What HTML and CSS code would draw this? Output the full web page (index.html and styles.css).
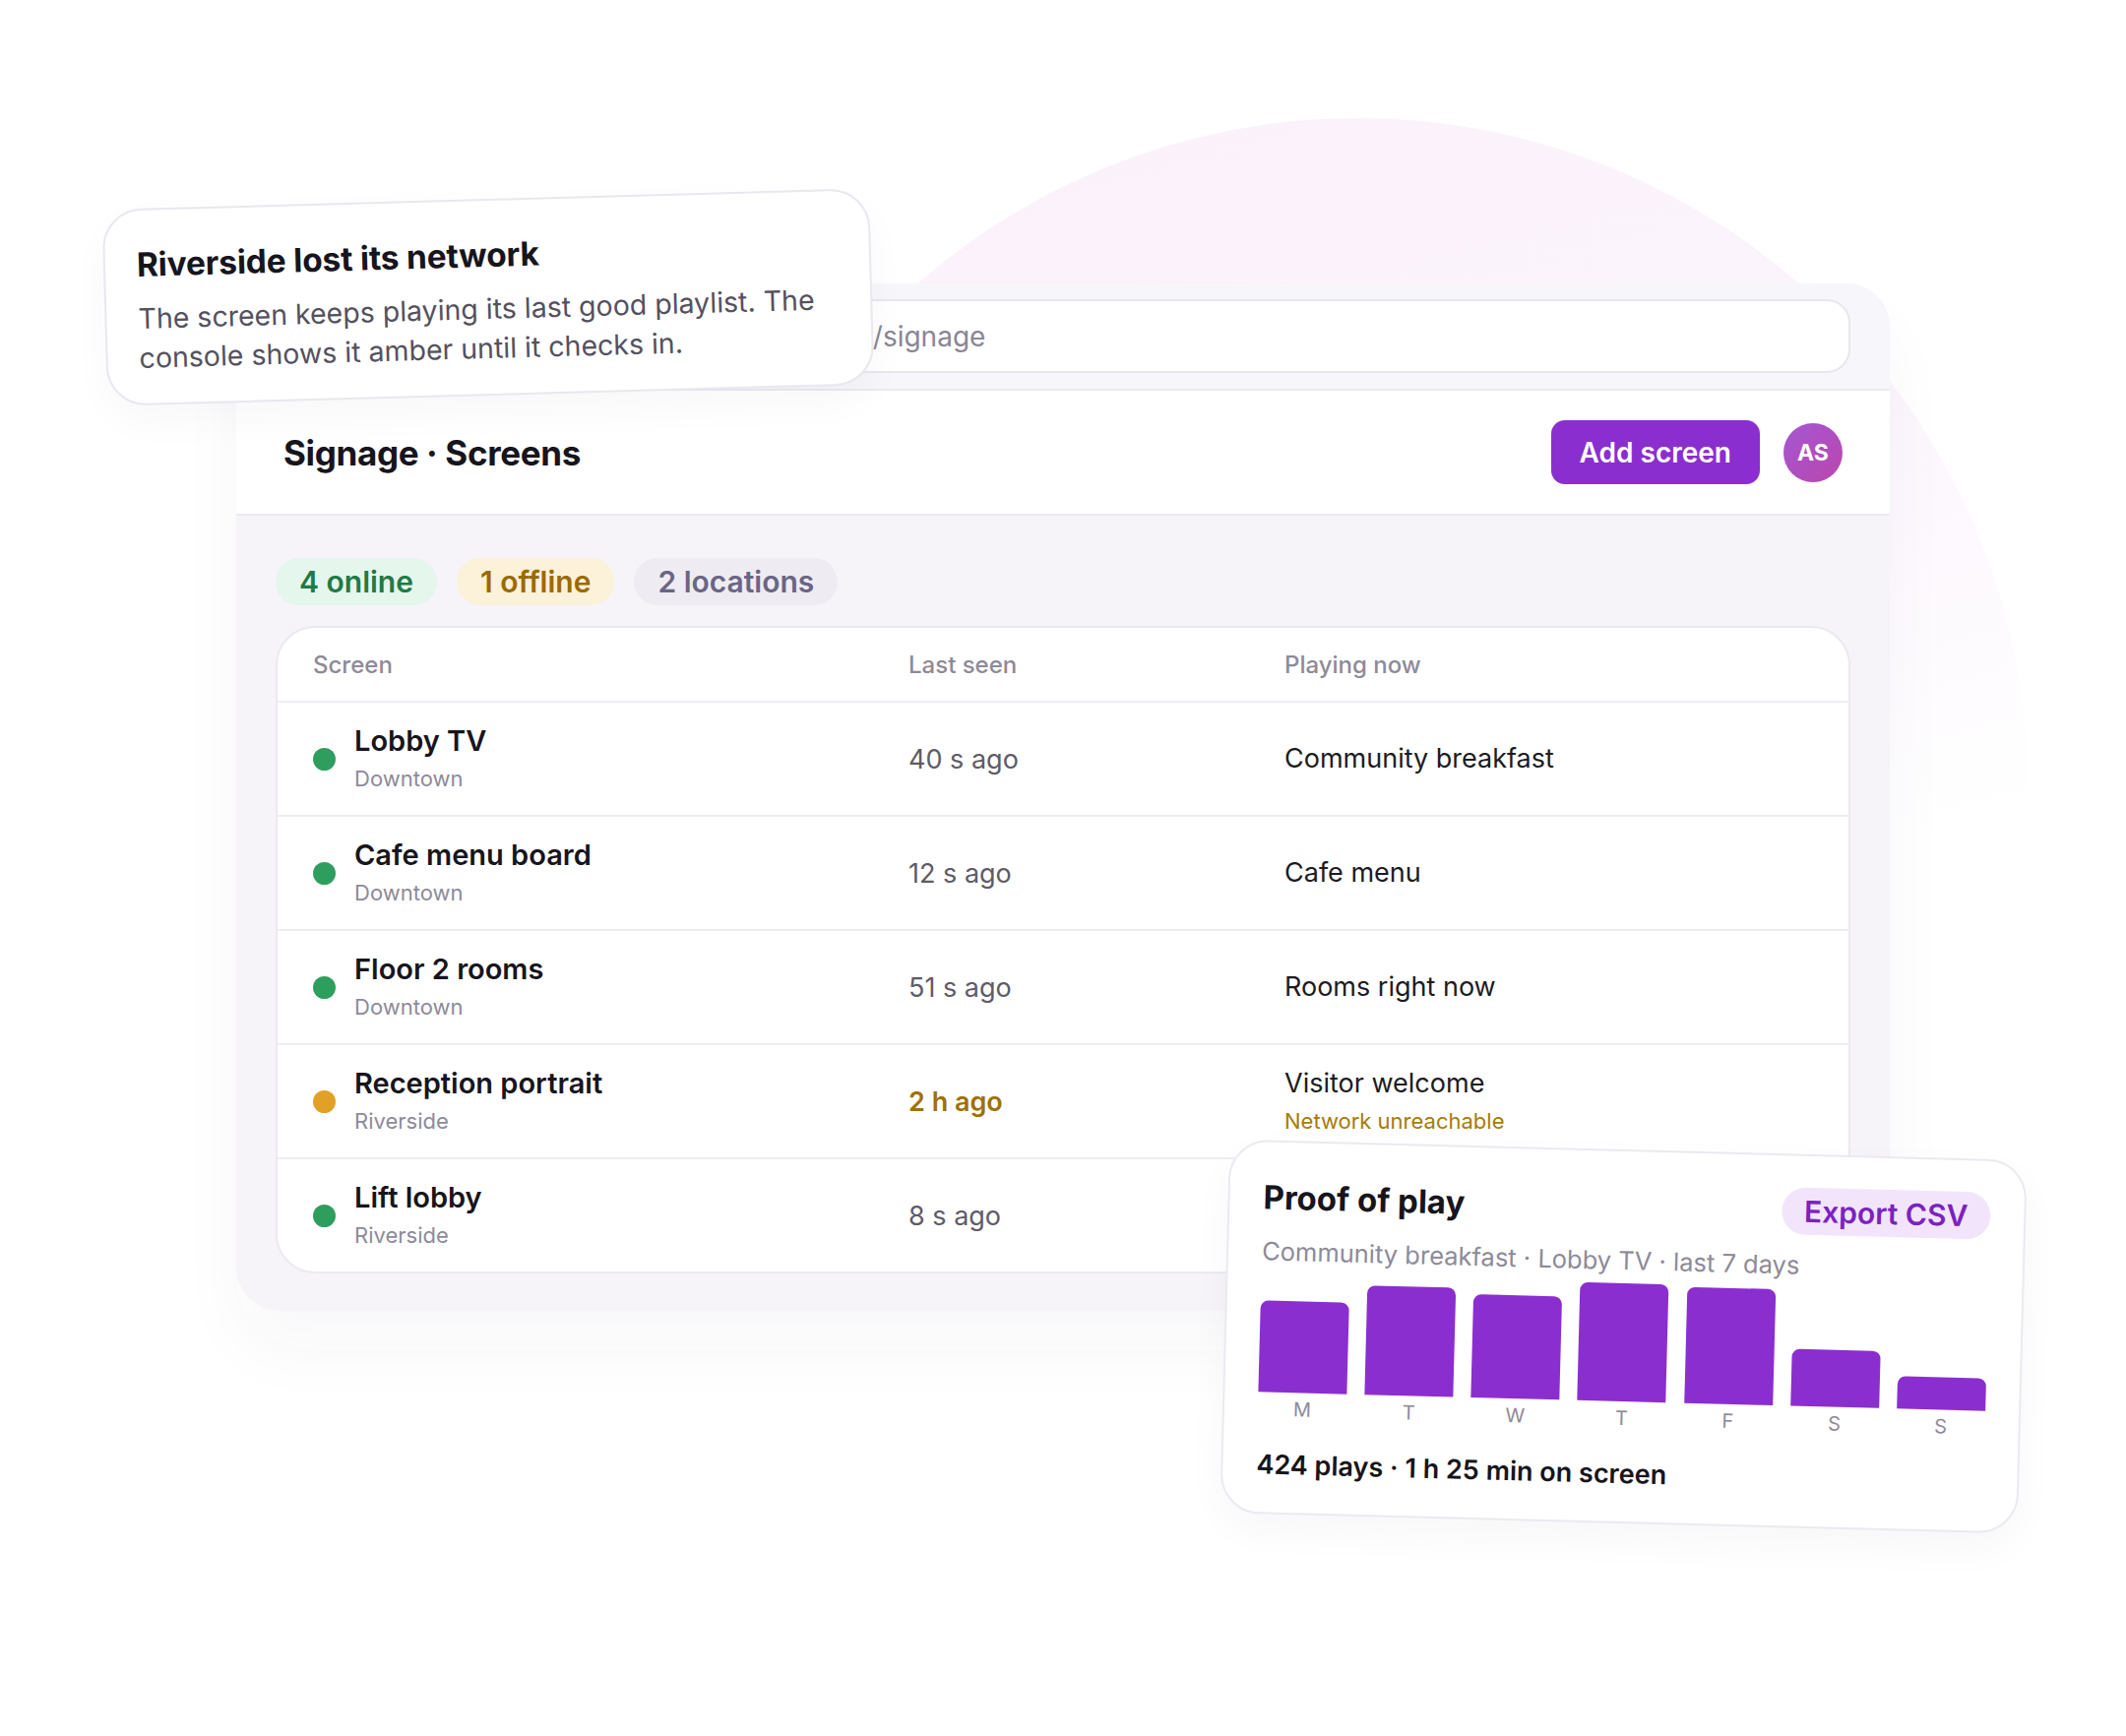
FILE: index.html
```html
<!DOCTYPE html>
<html lang="en">
  <head>
    <meta charset="UTF-8" />
    <meta name="viewport" content="width=device-width, initial-scale=1.0" />
    <title>Signage · Screens</title>
    <link rel="stylesheet" href="styles.css">
  </head>
  <body>
    <div class="stage">
      <div class="glow"></div>

      <div class="window">
        <div class="toolbar">
          <div class="url"><span class="host">https://console.example.com/northwind</span><span class="path">/signage</span></div>
        </div>
        <header class="topbar">
          <h1>Signage · Screens</h1>
          <button class="add">Add screen</button>
          <span class="avatar">AS</span>
        </header>
        <main class="content">
          <ul class="pills">
            <li class="pill ok">4 online</li>
            <li class="pill warn">1 offline</li>
            <li class="pill muted">2 locations</li>
          </ul>
          <div class="screens">
            <div class="row head">
              <span>Screen</span>
              <span>Last seen</span>
              <span>Playing now</span>
            </div>
            <div class="row">
              <div class="screen"><i class="dot"></i><div><p class="name">Lobby TV</p><p class="loc">Downtown</p></div></div>
              <span class="seen">40 s ago</span>
              <span class="playing">Community breakfast</span>
            </div>
            <div class="row">
              <div class="screen"><i class="dot"></i><div><p class="name">Cafe menu board</p><p class="loc">Downtown</p></div></div>
              <span class="seen">12 s ago</span>
              <span class="playing">Cafe menu</span>
            </div>
            <div class="row">
              <div class="screen"><i class="dot"></i><div><p class="name">Floor 2 rooms</p><p class="loc">Downtown</p></div></div>
              <span class="seen">51 s ago</span>
              <span class="playing">Rooms right now</span>
            </div>
            <div class="row">
              <div class="screen"><i class="dot amber"></i><div><p class="name">Reception portrait</p><p class="loc">Riverside</p></div></div>
              <span class="seen late">2 h ago</span>
              <div class="playing"><p>Visitor welcome</p><p class="alert">Network unreachable</p></div>
            </div>
            <div class="row">
              <div class="screen"><i class="dot"></i><div><p class="name">Lift lobby</p><p class="loc">Riverside</p></div></div>
              <span class="seen">8 s ago</span>
              <span class="playing"></span>
            </div>
          </div>
        </main>
      </div>

      <aside class="note">
        <h2>Riverside lost its network</h2>
        <p>The screen keeps playing its last good playlist. The console shows it amber until it checks in.</p>
      </aside>

      <aside class="proof">
        <div class="proof-head">
          <h3>Proof of play</h3>
          <button class="export">Export CSV</button>
        </div>
        <p class="sub">Community breakfast · Lobby TV · last 7 days</p>
        <div class="bars">
          <span style="height: 93px"></span>
          <span style="height: 111px"></span>
          <span style="height: 105px"></span>
          <span style="height: 120px"></span>
          <span style="height: 118px"></span>
          <span style="height: 58px"></span>
          <span style="height: 33px"></span>
        </div>
        <div class="days">
          <span>M</span><span>T</span><span>W</span><span>T</span><span>F</span><span>S</span><span>S</span>
        </div>
        <p class="total">424 plays · 1 h 25 min on screen</p>
      </aside>
    </div>
  </body>
</html>
```

FILE: styles.css
```css
* {
  box-sizing: border-box;
  margin: 0;
  padding: 0;
}
body {
  font-family: Inter, "Noto Sans", sans-serif;
  background: #fff;
  color: #17151c;
}
button {
  font-family: inherit;
  border: 0;
  cursor: pointer;
}
ul {
  list-style: none;
}
.stage {
  position: relative;
  width: 2160px;
  height: 1764px;
  overflow: hidden;
  padding: 288px 0 0 240px;
}

/* soft backdrop circle */
.glow {
  position: absolute;
  left: 700px;
  top: 120px;
  width: 1360px;
  height: 1360px;
  border-radius: 50%;
  background: linear-gradient(165deg, #fbf1fb 5%, #fcf5fd 35%, rgba(255, 255, 255, 0) 62%);
}

.window {
  position: relative;
  width: 1680px;
  height: 1044px;
  border-radius: 44px;
  overflow: hidden;
  background: #f6f4f9;
  box-shadow: 0 40px 70px rgba(70, 50, 110, 0.035);
}
.toolbar {
  padding: 16px 40px;
  background: #f7f6fa;
  border-bottom: 2px solid #ebe9f1;

  & .url {
    height: 75px;
    display: flex;
    align-items: center;
    padding-left: 68px;
    background: #fff;
    border: 2px solid #e8e6ee;
    border-radius: 24px;
    font-size: 28px;
    color: #8a8696;
    white-space: nowrap;
  }
  & .path {
    margin-left: 10px;
  }
}
.topbar {
  height: 127px;
  display: flex;
  align-items: center;
  gap: 24px;
  padding: 0 48px;
  background: #fff;
  border-bottom: 2px solid #ebe9f1;

  & h1 {
    flex: 1;
    font-size: 35px;
    font-weight: 700;
    letter-spacing: -0.01em;
  }
  & .add {
    height: 65px;
    padding: 0 29px;
    border-radius: 14px;
    background: #8b2ecf;
    color: #fff;
    font-size: 28px;
    font-weight: 600;
  }
  & .avatar {
    width: 60px;
    height: 60px;
    border-radius: 50%;
    display: grid;
    place-items: center;
    background: linear-gradient(135deg, #a457d3, #bb46ad);
    color: #fff;
    font-size: 23px;
    font-weight: 700;
  }
}
.content {
  padding: 43px 40px 0;
}
.pills {
  display: flex;
  gap: 20px;

  & .pill {
    height: 48px;
    line-height: 48px;
    padding: 0 24px;
    border-radius: 24px;
    font-size: 30px;
    font-weight: 600;
  }
  & .ok {
    background: #e5f6ec;
    color: #217a45;
  }
  & .warn {
    background: #fcf1d9;
    color: #9b6a00;
  }
  & .muted {
    background: #eeecf2;
    color: #6b6584;
  }
}
.screens {
  margin-top: 21px;
  background: #fff;
  border: 2px solid #ebe9f1;
  border-radius: 40px;
  overflow: hidden;

  & .row {
    display: grid;
    grid-template-columns: 605px 382px 1fr;
    align-items: center;
    height: 116px;
    padding-left: 36px;
    border-top: 2px solid #efedf3;
  }
  & .row.head {
    height: 74px;
    border-top: 0;
    font-size: 24px;
    font-weight: 500;
    color: #8e8a99;
  }
  & .screen {
    display: flex;
    align-items: center;
    gap: 19px;
  }
  & .dot {
    width: 23px;
    height: 23px;
    border-radius: 50%;
    background: #2e9e5f;
  }
  & .dot.amber {
    background: #e0a126;
  }
  & .name {
    font-size: 29px;
    font-weight: 600;
    line-height: 38px;
  }
  & .loc {
    margin-top: 2px;
    font-size: 22px;
    line-height: 34px;
    color: #8e8a99;
  }
  & .seen {
    font-size: 27px;
    color: #5f5b68;
  }
  & .seen.late {
    color: #a07000;
    font-weight: 600;
  }
  & .playing {
    font-size: 27px;
    line-height: 38px;
    color: #1d1b22;

    & .alert {
      margin-top: 2px;
      font-size: 22px;
      line-height: 34px;
      color: #a87b06;
    }
  }
}

/* floating cards */
.note {
  position: absolute;
  left: 106px;
  top: 202px;
  width: 780px;
  height: 200px;
  padding: 36px 32px;
  background: #fff;
  border: 2px solid #e9e7ef;
  border-radius: 40px;
  transform: rotate(-1.6deg);
  box-shadow: 0 16px 40px rgba(40, 30, 70, 0.03);

  & h2 {
    font-size: 33.5px;
    line-height: 38px;
    font-weight: 700;
    letter-spacing: -0.005em;
  }
  & p {
    margin-top: 16px;
    font-size: 28.5px;
    line-height: 40px;
    color: #55515e;
  }
}
.proof {
  position: absolute;
  left: 1244px;
  top: 1168px;
  width: 811px;
  height: 380px;
  padding: 32px 34px;
  background: #fff;
  border: 2px solid #ebe9f1;
  border-radius: 40px;
  transform: rotate(1.5deg);
  box-shadow: 0 16px 40px rgba(40, 30, 70, 0.035);

  & .proof-head {
    height: 48px;
    display: flex;
    align-items: center;
    justify-content: space-between;
  }
  & h3 {
    font-size: 33px;
    font-weight: 700;
  }
  & .export {
    height: 48px;
    padding: 0 23px;
    border-radius: 24px;
    background: #f2e5fb;
    color: #7b22c0;
    font-size: 30px;
    font-weight: 600;
  }
  & .sub {
    margin-top: 14px;
    font-size: 25.5px;
    line-height: 34px;
    color: #8e8a99;
  }
  & .bars {
    margin-top: 6px;
    height: 120px;
    display: flex;
    align-items: flex-end;
    justify-content: space-between;

    & span {
      width: 90px;
      border-radius: 8px 8px 0 0;
      background: #8b2ecf;
    }
  }
  & .days {
    margin-top: 5px;
    display: flex;
    justify-content: space-between;

    & span {
      width: 90px;
      text-align: center;
      font-size: 20px;
      line-height: 24px;
      color: #8e8a99;
    }
  }
  & .total {
    margin-top: 28px;
    font-size: 27px;
    line-height: 34px;
    font-weight: 600;
  }
}
```
